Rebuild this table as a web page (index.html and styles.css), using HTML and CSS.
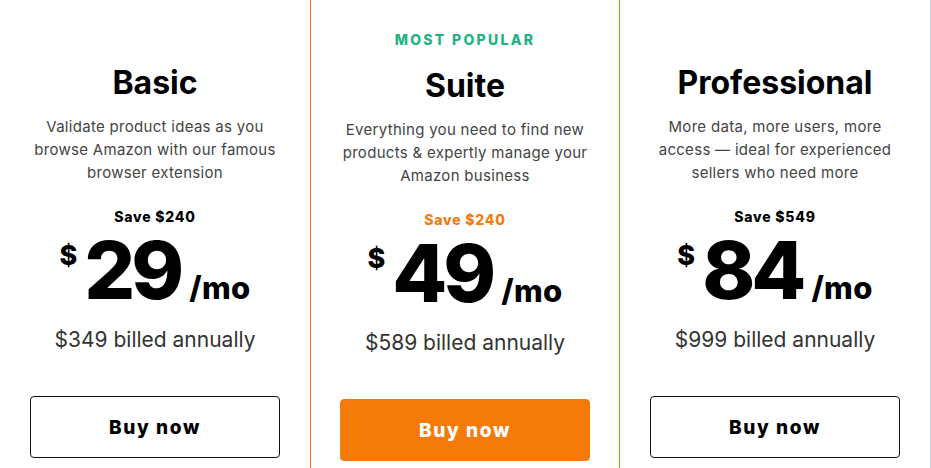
FILE: index.html
```html
<!DOCTYPE html>
<html lang="en">
<head>
<meta charset="utf-8">
<title>Pricing</title>
<link rel="stylesheet" href="styles.css">
</head>
<body>
<main class="plans">
  <section class="plan">
    <h2 class="plan-name">Basic</h2>
    <p class="plan-desc">Validate product ideas as you<br>browse Amazon with our famous<br>browser extension</p>
    <p class="plan-save">Save $240</p>
    <div class="plan-price"><span class="cur">$</span><span class="amount">29</span><span class="per">/mo</span></div>
    <p class="plan-annual">$349 billed annually</p>
    <a class="btn" href="#">Buy now</a>
  </section>
  <section class="plan plan--featured">
    <p class="plan-tag">MOST POPULAR</p>
    <h2 class="plan-name">Suite</h2>
    <p class="plan-desc">Everything you need to find new<br>products &amp; expertly manage your<br>Amazon business</p>
    <p class="plan-save plan-save--accent">Save $240</p>
    <div class="plan-price"><span class="cur">$</span><span class="amount">49</span><span class="per">/mo</span></div>
    <p class="plan-annual">$589 billed annually</p>
    <a class="btn btn--primary" href="#">Buy now</a>
  </section>
  <section class="plan">
    <h2 class="plan-name">Professional</h2>
    <p class="plan-desc">More data, more users, more<br>access — ideal for experienced<br>sellers who need more</p>
    <p class="plan-save">Save $549</p>
    <div class="plan-price"><span class="cur">$</span><span class="amount">84</span><span class="per">/mo</span></div>
    <p class="plan-annual">$999 billed annually</p>
    <a class="btn" href="#">Buy now</a>
  </section>
</main>
</body>
</html>
```

FILE: styles.css
```css
* { box-sizing: border-box; }
html, body { margin: 0; padding: 0; background: #fff; }
body {
  font-family: Inter, "Noto Sans", sans-serif;
  color: #000;
  overflow: hidden;
}
.plans {
  display: grid;
  grid-template-columns: 310px 310px 310px;
  width: 931px;
  min-height: 468px;
  border-right: 1px solid #ccd1d9;
}
.plan {
  display: flex;
  flex-direction: column;
  align-items: center;
  padding-top: 63px;
  text-align: center;
}
.plan--featured {
  padding-top: 31px;
  border-left: 1px solid #f47b0a;
  border-right: 1px solid #f47b0a;
}
.plan-tag {
  margin: 0 0 17px;
  font-size: 14px;
  line-height: 18px;
  font-weight: 800;
  letter-spacing: 2.3px;
  color: #1eb482;
}
.plan-name {
  margin: 0;
  font-size: 32px;
  line-height: 40px;
  font-weight: 700;
}
.plan-desc {
  margin: 12px 0 0;
  font-size: 15px;
  line-height: 23px;
  font-weight: 400;
  color: #444;
  letter-spacing: 0.3px;
}
.plan-save {
  margin: 25px 0 0;
  font-size: 14px;
  line-height: 16px;
  font-weight: 800;
  letter-spacing: 0.8px;
}
.plan-save--accent { color: #f47b0a; }
.plan-price {
  display: flex;
  align-items: baseline;
  justify-content: center;
  gap: 7px;
  margin-top: 13px;
  height: 64px;
}
.cur {
  align-self: flex-start;
  font-size: 27px;
  line-height: 24px;
  font-weight: 800;
  margin-top: 6px;
}
.amount {
  font-size: 80px;
  line-height: 64px;
  font-weight: 800;
  letter-spacing: -4px;
  margin-right: 2px;
}
.per {
  font-size: 31px;
  line-height: 30px;
  font-weight: 800;
  letter-spacing: 0.3px;
}
.plan-annual {
  margin: 25px 0 0;
  font-size: 21px;
  line-height: 26px;
  font-weight: 400;
  color: #333;
}
.btn {
  display: flex;
  align-items: center;
  justify-content: center;
  width: 250px;
  height: 62px;
  margin-top: 43px;
  border: 1px solid #111;
  border-radius: 4px;
  font-size: 19px;
  font-weight: 800;
  letter-spacing: 1.6px;
  color: #000;
  text-decoration: none;
}
.btn--primary {
  background: #f47b0a;
  border-color: #f47b0a;
  color: #fff;
}
```
